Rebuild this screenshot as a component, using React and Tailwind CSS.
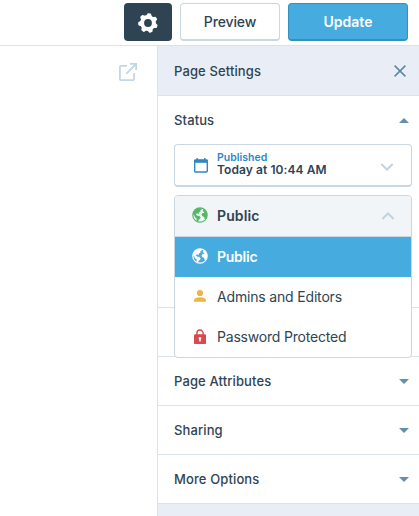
import React from "react";

const sections = ["Page Attributes", "Sharing", "More Options"];

function Gear() {
  return (
    <svg width="20" height="20" viewBox="0 0 20 20" fill="none">
      <circle cx="10" cy="10" r="5.9" stroke="#fff" strokeWidth="4" />
      {[8, 59.4, 110.9, 162.3, 213.7, 265.1, 316.6].map((a) => (
        <path key={a} d="M7 3.6 8.2.7Q8.4.2 9 .2H11q.6 0 .8.5L13 3.6Z" fill="#fff" transform={`rotate(${a} 10 10)`} />
      ))}
    </svg>
  );
}

function Globe({ className }) {
  return (
    <svg width="16" height="16" viewBox="0 0 16 16" className={className}>
      <circle cx="8" cy="8" r="7.2" fill="none" stroke="currentColor" strokeWidth="1.2" />
      <path
        fill="currentColor"
        d="M.8 7 2.4 3.2 5.8 1 9.4 1.2 9.9 2.6 8.3 3.3 8.7 4.4 7 5.6 6.6 6.9 5 6.2 3.9 7.5 5.3 8.8 7 8.7 8.7 10.3 7.9 11.9 6.6 12.8 6.2 15 4.6 14 4.6 11.6 3 10.2 2.2 8.2ZM11.2 2.2 13.4 3.3 15.1 6.4 14.9 9.6 13.6 12 12.2 11.6 12.3 9.9 10.4 9.3 9.5 7.5 10.6 6 12.3 6.1 11.9 4.8 10.6 4.3Z"
      />
    </svg>
  );
}

function Chevron({ up, className }) {
  return (
    <svg width="14" height="8" viewBox="0 0 14 8" fill="none" stroke="#c3d3de" strokeWidth="2" className={className}>
      <path d={up ? "M1.3 7 7 1.5 12.7 7" : "M1.3 1 7 6.5 12.7 1"} />
    </svg>
  );
}

function Caret({ up }) {
  return (
    <svg width="10" height="5" viewBox="0 0 10 5" fill="#638fac">
      <path d={up ? "M0 5 5 0 10 5Z" : "M0 0 5 5 10 0Z"} />
    </svg>
  );
}

function User() {
  return (
    <svg width="16" height="16" viewBox="0 0 16 16" fill="#efb543">
      <circle cx="8" cy="5" r="3.1" />
      <path d="M2 13.7v-1.2C2 10.2 5.5 9.3 8 9.3s6 .9 6 3.2v1.2Z" />
    </svg>
  );
}

function Lock() {
  return (
    <svg width="16" height="16" viewBox="0 0 16 16" className="mt-0.5">
      <path d="M4.9 6.5V4.1a3.1 3.1 0 0 1 6.2 0v2.4" fill="none" stroke="#d94a4f" strokeWidth="1.4" />
      <rect x="2" y="5.3" width="12" height="9.8" rx="1.2" fill="#d94a4f" />
      <path d="M8 8a1.4 1.4 0 0 1 .7 2.6V12.6H7.3V10.6A1.4 1.4 0 0 1 8 8Z" fill="#fff" />
    </svg>
  );
}

export default function App() {
  return (
    <div className="h-[516px] w-[419px] overflow-hidden bg-white font-['Inter',sans-serif] text-[#2e4453]">
      <header className="flex h-[46px] justify-end gap-2 border-b border-[#d9e3ea] pt-[3px] pr-[11px]">
        <button className="flex h-[38px] w-12 items-center justify-center rounded bg-[#2e4453] pt-px">
          <Gear />
        </button>
        <button className="h-[38px] w-[100px] rounded border border-b-2 border-[#c8d7e1] text-[14px] font-medium tracking-[-0.12px]">
          Preview
        </button>
        <button className="h-[38px] w-[120px] rounded border border-b-2 border-[#3590bd] bg-[#46abde] text-[14px] font-semibold text-white">
          Update
        </button>
      </header>

      <div className="flex h-[470px]">
        <main className="flex w-[157px] justify-end pt-[17px] pr-5">
          <svg width="18" height="18" viewBox="0 0 18 18" fill="none" stroke="#c3d7e3" strokeWidth="1.8">
            <path d="M8 2.9H1.9a1 1 0 0 0-1 1v12.2a1 1 0 0 0 1 1h12.2a1 1 0 0 0 1-1V10M11 .9h6.1V7M17 1 7.2 10.8" />
          </svg>
        </main>

        <aside className="w-[262px] border-l border-[#d9e3ea] bg-[#e9eef6] text-[13px] font-medium tracking-[0.12px]">
          <div className="flex h-[50px] items-center justify-between border-b border-[#d9e3ea] pr-[13px] pl-4">
            <span className="pt-0.5">Page Settings</span>
            <svg width="12" height="12" viewBox="0 0 12 12" stroke="#5c86a1" strokeWidth="1.5">
              <path d="m.6.6 10.8 10.8M11.4.6.6 11.4" />
            </svg>
          </div>

          <section className="relative h-[212px] border-b border-[#d9e3ea] bg-white">
            <div className="flex h-12 items-center justify-between pr-2.5 pl-4">
              <span className="pt-0.5">Status</span>
              <Caret up />
            </div>
            <div className="ml-4 flex h-[43px] w-[238px] items-center rounded border border-b-2 border-[#c8d7e1] pr-[17px] pl-[19px]">
              <svg width="14" height="15" viewBox="0 0 14 15" className="shrink-0">
                <path d="M3.2 0v3M10.8 0v3" stroke="#2f88c0" strokeWidth="1.4" />
                <rect x=".7" y="2" width="12.6" height="12" rx="1" fill="none" stroke="#2f88c0" strokeWidth="1.4" />
                <path d="M0 1.8h14V4.8H0Z" fill="#2f88c0" />
              </svg>
              <div className="ml-[9px] flex-1 pb-[3px] font-semibold whitespace-nowrap">
                <div className="text-[10.5px] leading-[13px] tracking-normal text-[#2c88c4]">Published</div>
                <div className="text-[12px] leading-[12px] tracking-[0.08px]">Today at 10:44 AM</div>
              </div>
              <Chevron className="mt-[3px]" />
            </div>

            <div className="absolute top-[99px] left-4 z-10 w-[238px] overflow-hidden rounded border border-[#c8d7e1] bg-white text-[14px] tracking-normal">
              <div className="flex h-[41px] items-center border-b border-[#c8d7e1] bg-[#f2f5f8] pr-4 pl-[17px]">
                <Globe className="mb-0.5 text-[#56b767]" />
                <span className="ml-[9px] flex-1 pb-0.5 font-semibold tracking-[0.1px]">Public</span>
                <Chevron up />
              </div>
              <div className="flex h-10 items-center gap-[9px] bg-[#46abde] pb-0.5 pl-[17px] font-semibold tracking-[-0.25px] text-white">
                <Globe />
                <span>Public</span>
              </div>
              <div className="flex h-10 items-center gap-[9px] pb-0.5 pl-[17px] font-normal tracking-[-0.17px]">
                <User />
                <span>Admins and Editors</span>
              </div>
              <div className="flex h-10 items-center gap-[9px] pb-0.5 pl-[17px] font-normal tracking-[-0.2px]">
                <Lock />
                <span>Password Protected</span>
              </div>
            </div>
          </section>

          <div className="h-[49px] border-b border-[#d9e3ea] bg-white" />
          {sections.map((name) => (
            <div key={name} className="flex h-[49px] items-center justify-between border-b border-[#d9e3ea] bg-white pr-2.5 pl-4">
              <span className="pt-0.5">{name}</span>
              <Caret />
            </div>
          ))}
        </aside>
      </div>
    </div>
  );
}
